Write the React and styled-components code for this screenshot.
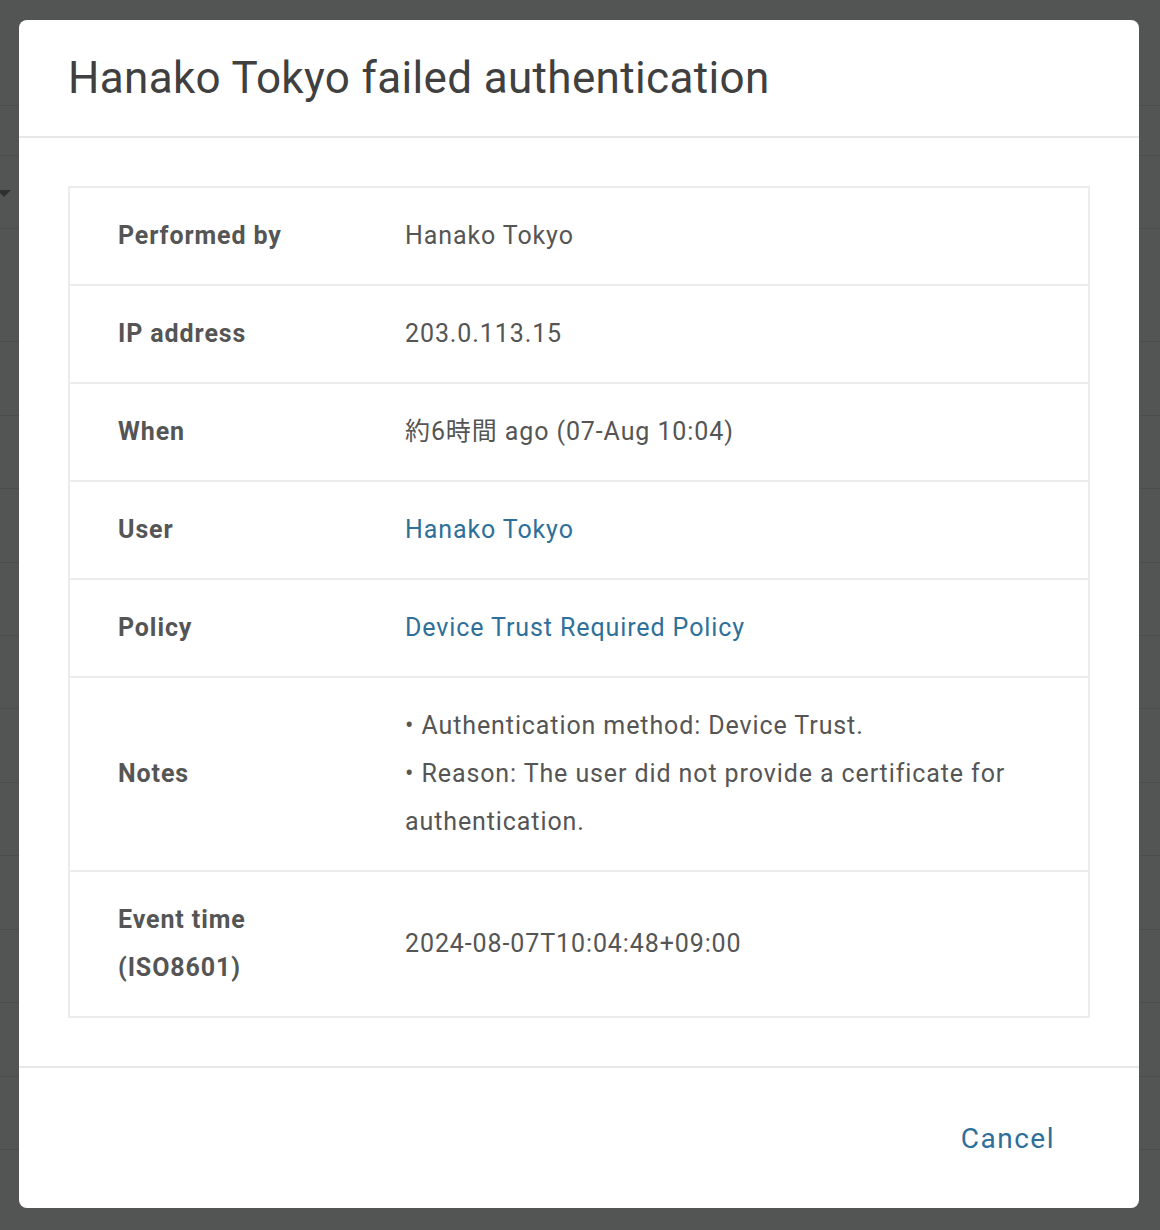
import styled, { createGlobalStyle } from "styled-components";

const GlobalStyle = createGlobalStyle`
  html, body {
    margin: 0;
    padding: 0;
    background: #535555;
  }
  body {
    font-family: Roboto, "Noto Sans CJK JP", "Liberation Sans", sans-serif;
    -webkit-font-smoothing: antialiased;
  }
`;

const rows = [
  { label: "Performed by", value: "Hanako Tokyo" },
  { label: "IP address", value: "203.0.113.15" },
  { label: "When", value: "約6時間 ago (07-Aug 10:04)" },
  { label: "User", value: "Hanako Tokyo", link: true },
  { label: "Policy", value: "Device Trust Required Policy", link: true },
  {
    label: "Notes",
    lines: [
      "• Authentication method: Device Trust.",
      "• Reason: The user did not provide a certificate for authentication.",
    ],
  },
  { label: "Event time (ISO8601)", value: "2024-08-07T10:04:48+09:00" },
];

const backdropLines = [105, 155, 228, 341, 415, 488, 562, 635, 708, 782, 855, 929, 1002, 1076, 1149];

const Page = styled.div`
  position: relative;
  width: 1160px;
  height: 1230px;
  overflow: hidden;
  background: #535555;
`;

const BackdropLine = styled.div`
  position: absolute;
  left: 0;
  right: 0;
  height: 1px;
  background: #4b4d4d;
`;

const Caret = styled.div`
  position: absolute;
  left: -3px;
  top: 190px;
  width: 0;
  height: 0;
  border-left: 7px solid transparent;
  border-right: 7px solid transparent;
  border-top: 7px solid #2f3131;
`;

const Overlay = styled.div`
  position: absolute;
  inset: 0;
  padding: 20px 0 0 19px;
`;

const Modal = styled.div`
  width: 1120px;
  height: 1188px;
  background: #ffffff;
  border-radius: 8px;
  display: flex;
  flex-direction: column;
  overflow: hidden;
`;

const Header = styled.div`
  height: 116px;
  padding: 0 49px;
  display: flex;
  align-items: center;
  border-bottom: 2px solid #e8e8e8;
`;

const Title = styled.h2`
  margin: 0;
  font-size: 44px;
  font-weight: 400;
  letter-spacing: 0.35px;
  color: #404040;
  line-height: 1.2;
`;

const Body = styled.div`
  padding: 48px 49px;
  border-bottom: 2px solid #e8e8e8;
`;

const Table = styled.div`
  border: 2px solid #ececec;
`;

const Row = styled.div`
  display: grid;
  grid-template-columns: 335px 1fr;
  align-items: center;
  padding: 24px 0;
  & + & {
    border-top: 2px solid #ececec;
  }
`;

const Label = styled.div`
  padding: 0 48px;
  font-size: 25px;
  line-height: 48px;
  font-weight: 700;
  letter-spacing: 0.9px;
  color: #555555;
`;

const Value = styled.div`
  padding-right: 48px;
  font-size: 25px;
  line-height: 48px;
  letter-spacing: 0.9px;
  color: ${(p) => (p.$link ? "#2e7099" : "#555555")};
`;

const Line = styled.div``;

const Footer = styled.div`
  flex: 1;
  display: flex;
  align-items: center;
  justify-content: flex-end;
  padding-right: 84px;
`;

const CancelButton = styled.button`
  border: none;
  background: none;
  padding: 0;
  font-family: inherit;
  font-size: 28px;
  letter-spacing: 1.5px;
  color: #2e7099;
  cursor: pointer;
`;

export default function App() {
  return (
    <>
      <GlobalStyle />
      <Page>
        {backdropLines.map((y) => (
          <BackdropLine key={y} style={{ top: y }} />
        ))}
        <Caret />
        <Overlay>
          <Modal>
            <Header>
              <Title>Hanako Tokyo failed authentication</Title>
            </Header>
            <Body>
              <Table>
                {rows.map((r) => (
                  <Row key={r.label}>
                    <Label>{r.label}</Label>
                    <Value $link={r.link}>
                      {r.lines ? r.lines.map((l) => <Line key={l}>{l}</Line>) : r.value}
                    </Value>
                  </Row>
                ))}
              </Table>
            </Body>
            <Footer>
              <CancelButton>Cancel</CancelButton>
            </Footer>
          </Modal>
        </Overlay>
      </Page>
    </>
  );
}
